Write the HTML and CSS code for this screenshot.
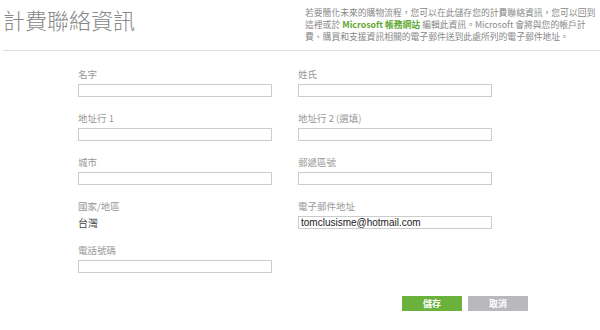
FILE: index.html
```html
<!DOCTYPE html>
<html>
  <head>
    <meta charset="UTF-8" />
    <title>計費聯絡資訊</title>
    <link rel="stylesheet" href="styles.css">
  </head>
  <body>
    <div class="page-header">
      <h1>計費聯絡資訊</h1>
      <p class="intro">
        若要簡化未來的購物流程，您可以在此儲存您的計費聯絡資訊，您可以回到<br>
        這裡或於 <span class="brand">Microsoft 帳務網站</span> 編輯此資訊。Microsoft 會將與您的帳戶計<br>
        費、購買和支援資訊相關的電子郵件送到此處所列的電子郵件地址。
      </p>
    </div>

    <div class="billing-form">
      <div class="field">
        <label for="firstName">名字</label>
        <input type="text" id="firstName" />
      </div>
      <div class="field">
        <label for="lastName">姓氏</label>
        <input type="text" id="lastName" />
      </div>
      <div class="field">
        <label for="address1">地址行 1</label>
        <input type="text" id="address1" />
      </div>
      <div class="field">
        <label for="address2">地址行 2 (選填)</label>
        <input type="text" id="address2" />
      </div>
      <div class="field">
        <label for="city">城市</label>
        <input type="text" id="city" />
      </div>
      <div class="field">
        <label for="zip">郵遞區號</label>
        <input type="text" id="zip" />
      </div>
      <div class="field">
        <label>國家/地區</label>
        <div class="value">台灣</div>
      </div>
      <div class="field">
        <label for="email">電子郵件地址</label>
        <input type="text" id="email" value="tomclusisme@hotmail.com" />
      </div>
      <div class="field">
        <label for="phone">電話號碼</label>
        <input type="text" id="phone" />
      </div>
    </div>

    <div class="actions">
      <button class="save">儲存</button>
      <button class="cancel">取消</button>
    </div>
  </body>
</html>
```

FILE: styles.css
```css
body {
  margin: 0;
  font-family: "Noto Sans CJK TC", "Liberation Sans", sans-serif;
  background-color: white;
  color: #888;
}

.page-header {
  display: flex;
  height: 50px;
  margin-left: 3px;
  border-bottom: 1px solid #ddd;
}

h1 {
  width: 302px;
  margin: 5px 0 0;
  font-size: 22px;
  font-weight: 300;
  line-height: 28px;
  color: #888;
}

.intro {
  margin: 7px 0 0;
  font-size: 8.8px;
  line-height: 12px;
  color: #888;
  white-space: nowrap;
}

.brand {
  color: #5fa830;
  font-weight: bold;
}

.billing-form {
  display: grid;
  grid-template-columns: 194px 194px;
  column-gap: 26px;
  row-gap: 14px;
  margin: 16px 0 0 78px;
}

label {
  display: block;
  margin-bottom: 3px;
  font-size: 9.5px;
  line-height: 14px;
  color: #999;
}

input[type="text"] {
  display: block;
  width: 194px;
  height: 13px;
  padding: 0 2px;
  font-family: "Liberation Sans", sans-serif;
  font-size: 10px;
  color: #222;
  border: 1px solid #ccc;
  box-sizing: border-box;
  outline: none;
}

.value {
  font-size: 10px;
  line-height: 13px;
  color: #444;
}

.actions {
  display: flex;
  gap: 6px;
  margin: 23px 0 0 402px;
}

button {
  width: 60px;
  height: 15px;
  padding: 0;
  border: none;
  font-family: "Noto Sans CJK TC", sans-serif;
  font-size: 9px;
  font-weight: bold;
  line-height: 15px;
  color: white;
  cursor: pointer;
}

.save {
  background-color: #6ab23c;
}

.cancel {
  background-color: #b9b9bd;
}
```
